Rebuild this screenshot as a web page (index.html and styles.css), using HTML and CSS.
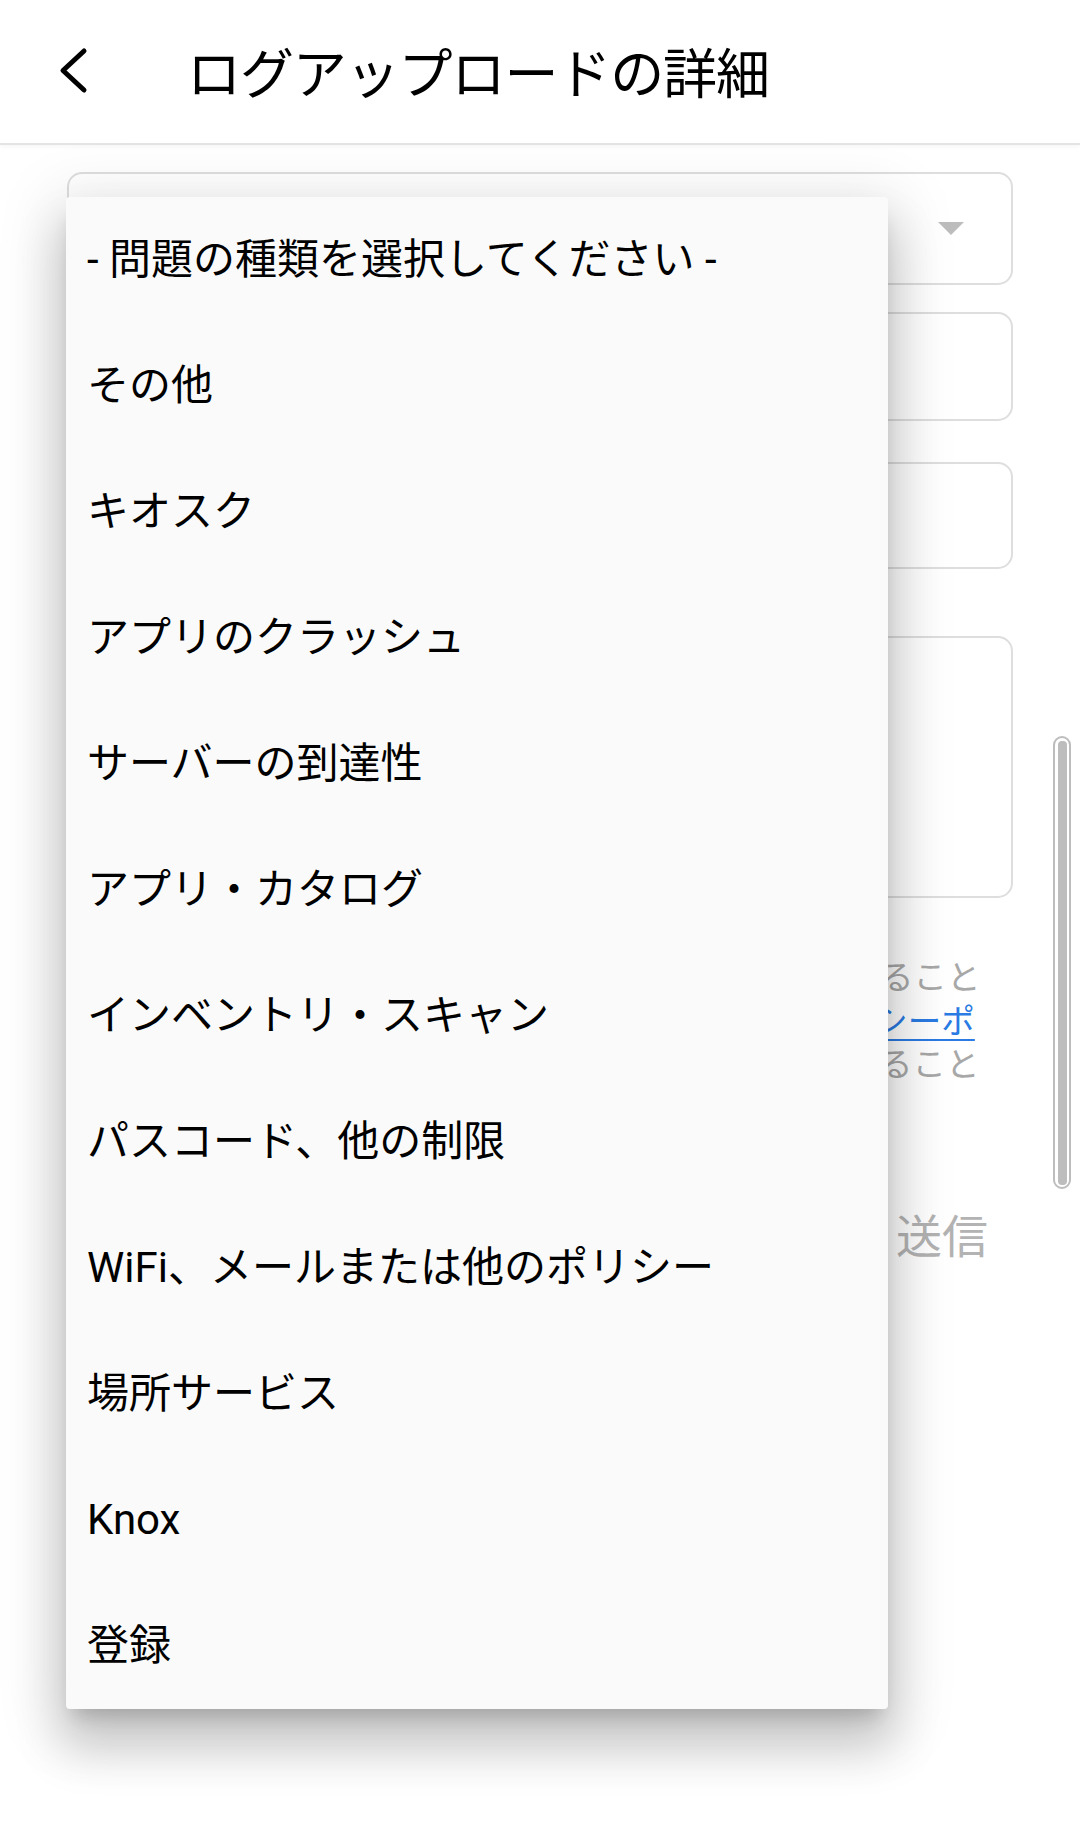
FILE: index.html
```html
<!DOCTYPE html>
<html lang="ja">
<head>
<meta charset="utf-8">
<title>ログアップロードの詳細</title>
<link rel="stylesheet" href="styles.css">
</head>
<body>
<div class="screen">
  <header class="appbar">
    <button class="back" aria-label="戻る">
      <svg width="34" height="48" viewBox="0 0 34 48"><path d="M27 4 L6 23.5 L27 43" fill="none" stroke="#000" stroke-width="5" stroke-linecap="round" stroke-linejoin="round"/></svg>
    </button>
    <h1 class="title">ログアップロードの詳細</h1>
  </header>

  <main class="form">
    <div class="field select">
      <span class="arrow"></span>
    </div>
    <div class="field input-a"></div>
    <div class="field input-b"></div>
    <div class="field textarea"></div>
    <p class="notice">
      <span class="line">ログをアップロードすると端末の診断情報が送信されること</span><br>
      <span class="line">に同意します。詳細については弊社の最新の<a href="#" class="link">プライバシーポ</a></span><br>
      <span class="line"><a href="#" class="link">リシー</a>を参照し、内容を確認・理解したうえで操作すること</span>
    </p>
    <div class="actions">
      <button class="send">送信</button>
    </div>
  </main>

  <div class="scrollbar"><div class="thumb"></div></div>

  <ul class="menu">
    <li>- 問題の種類を選択してください -</li>
    <li>その他</li>
    <li>キオスク</li>
    <li>アプリのクラッシュ</li>
    <li>サーバーの到達性</li>
    <li>アプリ・カタログ</li>
    <li>インベントリ・スキャン</li>
    <li>パスコード、他の制限</li>
    <li>WiFi、メールまたは他のポリシー</li>
    <li>場所サービス</li>
    <li>Knox</li>
    <li>登録</li>
  </ul>
</div>
</body>
</html>
```

FILE: styles.css
```css
* { box-sizing: border-box; }
html, body { margin: 0; padding: 0; background: #fff; }
body {
  font-family: Roboto, "Noto Sans CJK JP", sans-serif;
  color: #000;
  width: 1080px;
  height: 1835px;
  overflow: hidden;
}
.screen { position: relative; width: 1080px; height: 1835px; }

.appbar {
  height: 145px;
  display: flex;
  align-items: center;
  border-bottom: 2px solid #e4e4e4;
  box-shadow: 0 2px 4px rgba(0,0,0,0.04);
  background: #fff;
  padding-bottom: 2px;
}
.back {
  border: 0;
  background: none;
  padding: 0;
  margin-left: 57px;
  width: 34px;
  height: 48px;
  display: flex;
}
.title {
  margin: 0 0 0 96px;
  font-family: "Noto Sans CJK JP", sans-serif;
  font-weight: 400;
  font-size: 54px;
  line-height: 1;
  letter-spacing: -1.1px;
}

.form { padding: 0 67px; }
.field {
  border: 2.5px solid #dedede;
  border-radius: 15px;
  background: #fff;
}
.select {
  margin-top: 27px;
  height: 113px;
  display: flex;
  align-items: flex-start;
  justify-content: flex-end;
  padding: 48px 47px 0 0;
}
.arrow {
  width: 0; height: 0;
  border-left: 13px solid transparent;
  border-right: 13px solid transparent;
  border-top: 13px solid #bdbdbd;
}
.input-a { margin-top: 27px; height: 109px; }
.input-b { margin-top: 41px; height: 107px; }
.textarea { margin-top: 67px; height: 262px; }

.notice {
  margin: 55px 0 0 9px;
  font-family: "Noto Sans CJK JP", sans-serif;
  font-size: 33.5px;
  line-height: 43.5px;
  color: #a8a8a8;
  white-space: nowrap;
}
.link { color: #2a7be3; text-decoration: underline; text-decoration-thickness: 2px; text-underline-offset: 6px; }

.actions { display: flex; justify-content: flex-end; margin-top: 124px; padding-right: 25px; }
.send {
  border: 0; background: none; padding: 0;
  font-family: "Noto Sans CJK JP", sans-serif;
  font-size: 46px;
  line-height: 50px;
  letter-spacing: 0;
  color: #b3b3b3;
}

.scrollbar {
  position: absolute;
  left: 1053px;
  top: 736px;
  width: 18px;
  height: 453px;
  border: 2.5px solid #bdbdbd;
  border-radius: 9px;
  padding: 2.5px;
  background: #fff;
}
.thumb { width: 100%; height: 100%; background: #bdbdbd; border-radius: 4px; }

.menu {
  position: absolute;
  left: 66px;
  top: 197px;
  width: 822px;
  margin: 0;
  padding: 0;
  list-style: none;
  background: #fafafa;
  border-radius: 4px;
  box-shadow: 0 36px 48px 6px rgba(0,0,0,0.16), 0 12px 60px 14px rgba(0,0,0,0.10), 0 14px 18px -8px rgba(0,0,0,0.18);
}
.menu li {
  height: 126px;
  display: flex;
  align-items: center;
  padding-left: 21px;
  font-size: 42px;
  line-height: 1;
  white-space: nowrap;
}
```
